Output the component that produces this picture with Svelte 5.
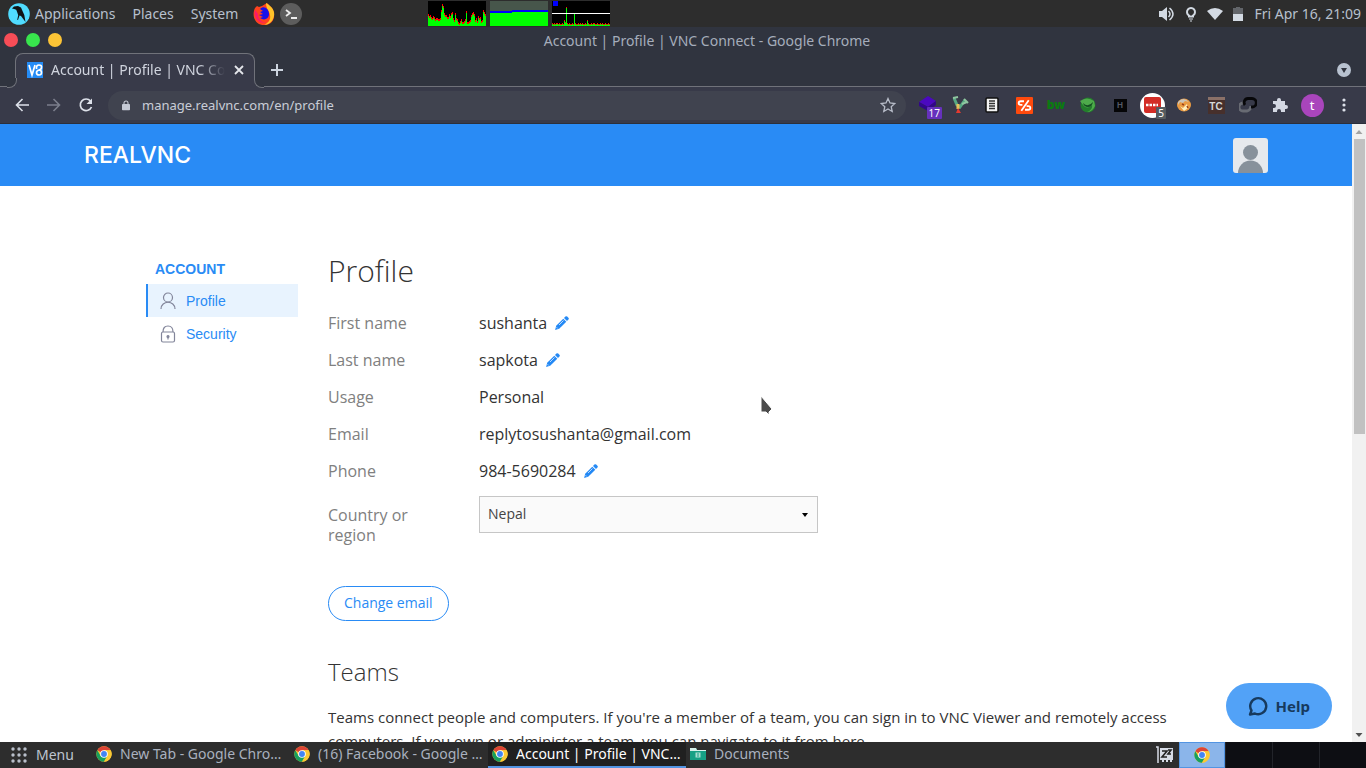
<script>
  const cpu = [12,10,11,9,8,10,9,7,8,8,7,7,8,16,22,20,13,11,11,9,9,12,10,13,14,8,6,13,8,7,4,3,5,7,4,4,5,7,15,4,4,5,6,11,13,14,12,6,8,5,10,8,9,5,6,16,14,12,11,7];
  const net = [2,1,2,1,2,2,1,2,1,1,2,1,5,3,18,2,1,2,1,1,2,1,12,2,1,1,2,1,2,1,2,1,1,2,1,5,2,1,1,2,1,2,2,1,1,2,1,1,2,1,2,1,1,2,1,1,2,1];
  const rows = [
    ['First name', 'sushanta', true],
    ['Last name', 'sapkota', true],
    ['Usage', 'Personal', false],
    ['Email', 'replytosushanta@gmail.com', false],
    ['Phone', '984-5690284', true]
  ];
  const tasks = ['New Tab - Google Chrome', '(16) Facebook - Google Chrome', 'Account | Profile | VNC Connect'];
  let country = $state('Nepal');
</script>

{#snippet chrome()}
  <svg width="16" height="16" viewBox="0 0 48 48" aria-hidden="true">
    <circle cx="24" cy="24" r="23" fill="#fbc934" />
    <path d="M24 24 4.1 12.5A23 23 0 0 1 43.9 12.5H24Z" fill="#dd4436" />
    <path d="M4.1 12.5A23 23 0 0 0 24 47L34 29.7 24 24 14 29.7Z" fill="#17a05d" />
    <path d="M24 12.5H43.9A23 23 0 0 1 24 47L34 30Z" fill="#fbc934" />
    <circle cx="24" cy="24" r="11.5" fill="#fff" />
    <circle cx="24" cy="24" r="8.8" fill="#4285f4" />
  </svg>
{/snippet}

<div class="desktop">
  <header class="panel">
    <nav class="menus">
      <svg class="parrot" width="22" height="22" viewBox="0 0 22 22" aria-hidden="true">
        <circle cx="11" cy="11" r="10.8" fill="#50dcff" />
        <path d="M4 5.500 6 3.500l4-.5 3 1.500 1.500 3.500 1.800 4 1.200 7-3-4-1.500-2-1.500-.5-1.500 4.500-.8-.3 1-4.500-1-3-1-2.500-2-.7Z" fill="#101416" />
      </svg>
      <button>Applications</button>
      <button>Places</button>
      <button>System</button>
      <svg class="fox" width="22" height="24" viewBox="0 0 22 24" aria-hidden="true">
        <path d="M2 6 4 4l2 1 3-1 5-3 5 5c4 6 3 17-8 17C3 23-2 15 2 6Z" fill="#ff421e" />
        <path d="M13 1c7 4 9 9 8 13-1 6-6 9-10 9 4-2 7-5 6-10-.5-4-4-6-4-12Z" fill="#ffc329" />
        <path d="M7 7c4-4 9 0 9 5s-5 7-9 4l3-1-4-2 4-1-3-2 3-1Z" fill="#1710e8" />
        <path d="M2 8c-2 8 4 14 11 13-5-1-8-4-8-9Z" fill="#f91b69" />
      </svg>
      <svg width="22" height="22" viewBox="0 0 22 22" aria-hidden="true">
        <circle cx="11" cy="11" r="11" fill="#5d5d5d" />
        <path d="m6 7 4 3-4 3M11 15h6" fill="none" stroke="#eee" stroke-width="1.8" />
      </svg>
    </nav>
    <div class="monitors">
      <svg width="58" height="25" shape-rendering="crispEdges" aria-hidden="true">
        <rect width="58" height="25" fill="#000" />
        {#each cpu as v, i}
          <rect x={i} y={25 - v} width="1" height={v} fill="#f00" />
          <rect x={i} y={27 - v} width="1" height={v} fill="#0f0" />
        {/each}
      </svg>
      <svg width="58" height="25" shape-rendering="crispEdges" aria-hidden="true">
        <rect width="58" height="25" fill="#47564b" />
        <path d="M0 10h22v-1h36v5H0Z" fill="#00f" />
        <path d="M0 12h22v-1h36v14H0Z" fill="#0f0" />
      </svg>
      <svg width="58" height="25" shape-rendering="crispEdges" aria-hidden="true">
        <rect width="58" height="25" fill="#000" />
        <rect x="1" width="5" height="5" fill="#00f" />
        {#each net as v, i}
          <rect x={i} y={24 - v} width="1" height={v + 1} fill="#f00" />
          <rect x={i} y={25 - v} width="1" height={v} fill="#0f0" />
        {/each}
        <rect y="12" width="58" height="1" fill="#fff" />
      </svg>
    </div>
    <div class="tray">
      <svg width="16" height="16" viewBox="0 0 16 16" aria-hidden="true">
        <path d="M0 5h3l5-4v14l-5-4H0Z" fill="#d3dae3" />
        <path d="M9.500 5q3 3 0 6M10.500 2q7 6 0 12" fill="none" stroke="#d3dae3" stroke-width="1.500" />
      </svg>
      <svg width="12" height="16" viewBox="0 0 12 16" aria-hidden="true">
        <path d="M4 10.500V9.500a4 4 0 1 1 4 0v1Z" fill="none" stroke="#d3dae3" stroke-width="2" />
        <path d="M4 13h4M5 15h2" stroke="#d3dae3" stroke-width="1" />
      </svg>
      <svg width="16" height="16" viewBox="0 0 16 16" aria-hidden="true">
        <path d="M0 5q8-6 16 0L8 14Z" fill="#d3dae3" />
      </svg>
      <svg width="10" height="16" viewBox="0 0 10 16" aria-hidden="true">
        <path d="M0 2h3V1h4v1h3v6H0Z" fill="#62656a" /><path d="M0 8h10v7H0Z" fill="#d3dae3" />
      </svg>
      <time>Fri Apr 16, 21:09</time>
    </div>
  </header>

  <div class="titlebar">
    <div class="lights">
      <button class="red" aria-label="Close window"></button>
      <button class="green" aria-label="Maximize window"></button>
      <button class="amber" aria-label="Minimize window"></button>
    </div>
    <span class="title">Account | Profile | VNC Connect - Google Chrome</span>
    <span></span>
  </div>

  <div class="strip">
    <div class="tab">
      <span class="curve left"></span><span class="curve right"></span>
      <svg width="16" height="16" viewBox="0 0 16 16" aria-hidden="true">
        <rect width="16" height="16" fill="#258cf6" />
        <path d="m2 3 3 10 3-10M9.500 7q-.5-4 2.500-4t2.500 2.500q0 2-2.500 2.500-2.500.500-2.500 2.700T12 13t2.500-2.500Q14.500 8 12 8" fill="none" stroke="#fff" stroke-width="1.700" />
      </svg>
      <span class="tabtext">Account | Profile | VNC Connect</span>
      <button aria-label="Close tab"><svg width="10" height="10" viewBox="0 0 10 10"><path d="m1 1 8 8M9 1 1 9" stroke="#e4e6eb" stroke-width="1.800" /></svg></button>
    </div>
    <button class="plus" aria-label="New tab"><svg width="12" height="12" viewBox="0 0 12 12"><path d="M6 0v12M0 6h12" stroke="#ccd4df" stroke-width="2" /></svg></button>
    <button class="search" aria-label="Search tabs"><svg width="14" height="14" viewBox="0 0 14 14"><circle cx="7" cy="7" r="7" fill="#b8c2d0" /><path d="M4 5h6l-3 5Z" fill="#30343f" /></svg></button>
  </div>

  <div class="toolbar">
    <button aria-label="Back"><svg width="14" height="14" viewBox="0 0 14 14"><path d="M14 7H2M7.500 1 1.500 7l6 6" fill="none" stroke="#dde1ea" stroke-width="1.600" /></svg></button>
    <button aria-label="Forward"><svg width="14" height="14" viewBox="0 0 14 14"><path d="M0 7h12M6.500 1l6 6-6 6" fill="none" stroke="#7b7e8c" stroke-width="1.600" /></svg></button>
    <button aria-label="Reload"><svg width="16" height="16" viewBox="0 0 16 16"><path d="M13.500 10a5.800 5.800 0 1 1-1-6" fill="none" stroke="#dde1ea" stroke-width="1.700" /><path d="M14 1.500V7H8.500Z" fill="#dde1ea" /></svg></button>
    <div class="omnibox">
      <svg width="8" height="11" viewBox="0 0 10 12" aria-hidden="true"><path d="M1 4h8q1 0 1 1v6q0 1-1 1H1q-1 0-1-1V5q0-1 1-1Z" fill="#c5cad5" /><path d="M2.500 5V3a2.500 2.500 0 0 1 5 0v2" fill="none" stroke="#c5cad5" stroke-width="1.300" /></svg>
      <input aria-label="Address" value="manage.realvnc.com/en/profile" />
      <button aria-label="Bookmark"><svg width="16" height="16" viewBox="0 0 16 16"><path d="m8 1.500 2 4.500 4.800.5-3.600 3.200 1 4.800L8 12l-4.200 2.500 1-4.800L1.200 6.500 6 6Z" fill="none" stroke="#b7bcc8" stroke-width="1.300" /></svg></button>
    </div>
    <div class="extensions">
      <button aria-label="Layers"><svg width="20" height="20" viewBox="0 0 20 20"><path d="m10 1 8 5-8 6-9-5Z" fill="#4b08bf" /><path d="m1 7 9 5 8-6v4l-8 6-9-5Z" fill="#31068a" /></svg><span class="badge violet">17</span></button>
      <button aria-label="Sapling"><svg width="18" height="18" viewBox="0 0 18 18"><path d="m3 2 3 7 3 2 5-7" fill="none" stroke="#55a983" stroke-width="3" /><path d="m2 2 5-1M13 3l4 4M11 8l5-2" stroke="#8fc6a0" stroke-width="2" /><path d="M7 8v5" stroke="#e4c15c" stroke-width="3" /><path d="m7 12-2 5h5Z" fill="#e5392f" /></svg></button>
      <button aria-label="Reader"><svg width="14" height="16" viewBox="0 0 14 16"><rect x="1" y="1" width="12" height="14" rx="1" fill="#f4f4f4" stroke="#111" stroke-width="1.500" /><path d="M4 4h6M4 6.500h6M4 9h6M4 11.500h6" stroke="#333" stroke-width="1.300" /></svg></button>
      <button aria-label="Routes"><svg width="17" height="17" viewBox="0 0 16 16"><rect width="16" height="16" rx="1" fill="#ff4a0d" /><path d="M7.500 4H4.500Q2.500 4 2.500 5.700T4.500 7.500H6M12 3 5 13M8.500 12h3q2 0 2-1.700T11.500 8.500H10" fill="none" stroke="#fff" stroke-width="1.700" /></svg></button>
      <button aria-label="Builder"><span class="bw">bw</span></button>
      <button aria-label="Green orb"><svg width="18" height="16" viewBox="0 0 18 16"><circle cx="9" cy="8" r="7.500" fill="#237d2c" /><path d="M1 4q7-5 14 0l1 5q-3 6-8 6 6-2 5-7-5 5-9 0Z" fill="#4eaa4b" /><path d="M4 6q5 5 10-1-1 5-5 5-4 0-5-4Z" fill="#154f22" /></svg></button>
      <button aria-label="H"><span class="hbox">H</span></button>
      <button aria-label="Passwords"><span class="white"><svg width="17" height="16" viewBox="0 0 17 16"><rect width="17" height="16" rx="2" fill="#d32d27" /><path d="M2 8h12" stroke="#fff" stroke-width="2.500" stroke-dasharray="2.500 1" /></svg></span><span class="badge gray">5</span></button>
      <button aria-label="Cookies"><svg width="16" height="14" viewBox="0 0 16 14"><ellipse cx="8" cy="7" rx="7" ry="6.500" fill="#e99a42" /><path d="M2 4q5-6 11 0l-4-1-2 2-3-1-2 3" fill="#c9c4bb" /><path d="m4 8 3 2 4-4 1 4-4 3Z" fill="#fff0bd" /><path d="m6 6 2 1m3 1 1 2" stroke="#9c3f16" stroke-width="1.500" /></svg></button>
      <button aria-label="TC"><span class="tc">TC</span></button>
      <button aria-label="Links"><svg width="18" height="18" viewBox="0 0 18 18" fill="none" stroke-width="2.800"><path d="M5 7H4a3.800 3.800 0 0 0 0 8h4a4 4 0 0 0 3.500-5" stroke="#686b73" /><path d="M12 11h1a4 4 0 0 0 0-8.500H9a4 4 0 0 0-3 6.500" stroke="#070709" /></svg></button>
      <button aria-label="Extensions"><svg width="16" height="16" viewBox="0 0 16 16"><path d="M1 4h4V3a2 2 0 0 1 4 0v1h4v4h1a2 2 0 0 1 0 4h-1v3H9v-1a2 2 0 0 0-4 0v1H1v-4h1a2 2 0 0 0 0-4H1Z" fill="#d4d8e3" /></svg></button>
      <button aria-label="Account"><span class="profile">t</span></button>
      <button aria-label="Browser menu"><svg width="4" height="14" viewBox="0 0 4 14" fill="#dde1ea"><circle cx="2" cy="2" r="1.600" /><circle cx="2" cy="7" r="1.600" /><circle cx="2" cy="12" r="1.600" /></svg></button>
    </div>
  </div>

  <div class="viewport">
    <div class="page">
      <header class="site">
        <a class="logo" href="#home">REALVNC</a>
        <button class="avatar" aria-label="Your account"><svg width="35" height="35" viewBox="0 0 35 35"><rect width="35" height="35" rx="3" fill="#e6e9ed" /><circle cx="17.500" cy="14.500" r="7.500" fill="#87919b" /><path d="M5 35a12.500 12.500 0 0 1 25 0Z" fill="#87919b" /></svg></button>
      </header>
      <div class="content">
        <nav class="side">
          <h2>ACCOUNT</h2>
          <a class="current" href="#profile">
            <svg width="16" height="18" viewBox="0 0 16 18" fill="none" stroke="#82859a" stroke-width="1.200"><circle cx="8" cy="5.500" r="4.500" /><path d="M1 17c0-9 14-9 14 0" /></svg>
            Profile</a>
          <a href="#security">
            <svg width="16" height="18" viewBox="0 0 16 18" fill="none" stroke="#82859a" stroke-width="1.200"><rect x="1.500" y="7" width="13" height="10" rx="1.500" /><path d="M3 7q0-6 5-6t5 6" /><circle cx="8" cy="11.500" r="1" fill="#82859a" /><path d="M8 12v2.500" /></svg>
            Security</a>
        </nav>
        <main>
          <h1>Profile</h1>
          <dl>
            {#each rows as [label, value, editable]}
              <div class="row">
                <dt>{label}</dt>
                <dd>{value}{#if editable}<button class="edit" aria-label="Edit {label}"><svg width="14" height="14" viewBox="0 0 14 14"><path d="M9 2 10.400.6q.9-.9 1.800 0l1.200 1.200q.9.900 0 1.800L12 5Z" fill="#2489f5" /><path d="M8.300 2.700 11.300 5.700 4.200 12.800.1 13.900l1.100-4.100Z" fill="#2489f5" /><path d="M1.600 11.300 2.700 12.400M4 9l4.500-4.500" stroke="#fff" stroke-width=".7" /></svg></button>{/if}</dd>
              </div>
            {/each}
          </dl>
          <div class="region">
            <label for="country">Country or region</label>
            <div class="choice">
              <select id="country" bind:value={country}><option>Nepal</option></select>
              <svg width="6" height="4" viewBox="0 0 6 4" aria-hidden="true"><path d="M0 0h6L3 4Z" fill="#000" /></svg>
            </div>
          </div>
          <button class="change">Change email</button>
          <h2>Teams</h2>
          <p>Teams connect people and computers. If you're a member of a team, you can sign in to VNC Viewer and remotely access computers. If you own or administer a team, you can navigate to it from here.</p>
        </main>
      </div>
    </div>
    <div class="scrollbar" aria-hidden="true">
      <svg width="14" height="14" viewBox="0 0 14 14"><path d="M3.500 10h7L7 6Z" fill="#a3a3a3" /></svg>
      <div class="track"><div class="thumb"></div></div>
      <svg width="14" height="14" viewBox="0 0 14 14"><path d="M3.500 5h7L7 9Z" fill="#505050" /></svg>
    </div>
    <button class="help">
      <svg width="20" height="20" viewBox="0 0 20 20" aria-hidden="true"><path d="M3.500 14.500A8 8 0 1 1 7 17.500L2 18.500Z" fill="none" stroke="#173a5e" stroke-width="2.400" stroke-linejoin="round" /></svg>
      Help
    </button>
    <svg class="pointer" width="16" height="24" viewBox="0 0 16 24" aria-hidden="true"><path d="M2 2v16h5l3 3V18l3-3Z" fill="#4b4b4b" stroke="#fff" stroke-width="1" /></svg>
  </div>

  <footer class="taskbar">
    <button class="start">
      <svg width="16" height="16" viewBox="0 0 16 16" fill="#b9bfca" aria-hidden="true">
        {#each [2, 8, 14] as y}{#each [2, 8, 14] as x}<circle cx={x} cy={y} r="1.700" />{/each}{/each}
      </svg>
      Menu
    </button>
    <div class="tasks">
      {#each tasks as task, i}
        <button class:active={i === 2}>{@render chrome()}<span>{task}</span></button>
      {/each}
      <button>
        <svg width="16" height="16" viewBox="0 0 16 16" aria-hidden="true"><path d="M0 2h6l1 2h9v10H0Z" fill="#16a085" /><path d="M0 2h6l1 2h9v1H0Z" fill="#d5f1eb" /><rect x="5.500" y="6.500" width="5" height="5" fill="#a5ded1" /><path d="M7 8h2m-2 2h2" stroke="#16a085" /></svg>
        <span>Documents</span>
      </button>
    </div>
    <svg class="sleep" width="18" height="18" viewBox="0 0 18 18" aria-hidden="true"><path d="M0 1h2v16" fill="none" stroke="#d7dce6" stroke-width="1.500" /><path d="M4 2h13v12h-1v2h-2v-2h-2v2h-2v-2H8v2H6v-2H4Z" fill="#d7dce6" /><path d="M6 5h5l-5 6h5M12 4h3l-3 4h3" fill="none" stroke="#222" stroke-width="1.600" /></svg>
    <div class="spaces">
      <button class="on" aria-label="Workspace 1">{@render chrome()}</button>
      <button aria-label="Workspace 2"></button>
      <button aria-label="Workspace 3"></button>
      <button aria-label="Workspace 4"></button>
    </div>
  </footer>
</div>

<style>
  :global(body) { margin: 0; }
  * { box-sizing: border-box; }
  button { border: 0; padding: 0; background: none; color: inherit; font: inherit; }
  svg { display: block; flex: none; }
  a { text-decoration: none; }
  .desktop { display: flex; flex-direction: column; height: 100vh; overflow: hidden; font: 14px/20px "Noto Sans", sans-serif; background: #30343f; }

  .panel { flex: none; height: 27px; display: grid; grid-template-columns: 428px auto 1fr; align-items: center; background: #2d2d2d; color: #b7c0cd; padding-right: 5px; }
  .menus { display: flex; align-items: center; padding-left: 8px; gap: 17px; }
  .menus .parrot { margin-right: -12px; }
  .menus .fox { margin: 0 -12px 0 -2px; }
  .monitors { display: flex; gap: 4px; }
  .tray { display: flex; align-items: center; justify-content: flex-end; gap: 10px; }
  .tray time { margin-left: 2px; }

  .titlebar { flex: none; height: 26px; display: grid; grid-template-columns: 1fr auto 1fr; align-items: center; padding: 0 4px; color: #a5adbb; }
  .title { margin-left: 48px; padding-top: 1px; }
  .lights { display: flex; gap: 8px; }
  .lights button { width: 14px; height: 14px; border-radius: 50%; }
  .red { background: #f74d57; } .green { background: #38e54d; } .amber { background: #fcc436; }

  .strip { flex: none; height: 34px; display: flex; align-items: center; padding: 0 15px; box-shadow: inset 0 -1px #70727a; }
  .tab { position: relative; width: 240px; height: 34px; display: flex; align-items: center; padding: 0 10px 1px 11px; border: 1px solid #70727a; border-bottom: 0; border-radius: 8px 8px 0 0; background: #383a49; color: #d0d4de; }
  .curve { position: absolute; bottom: 0; width: 9px; height: 9px; background: #383a49; }
  .curve::before { content: ""; display: block; width: 9px; height: 9px; background: #30343f; border-bottom: 1px solid #70727a; }
  .left { left: -9px; } .right { right: -9px; }
  .left::before { border-right: 1px solid #70727a; border-bottom-right-radius: 8px; }
  .right::before { border-left: 1px solid #70727a; border-bottom-left-radius: 8px; }
  .tabtext { flex: 1; margin: 0 9px 0 8px; white-space: nowrap; overflow: hidden; mask-image: linear-gradient(90deg, #000 85%, transparent); }
  .plus { margin-left: 16px; }
  .search { margin-left: auto; }

  .toolbar { flex: none; height: 37px; display: flex; align-items: center; padding: 0 6px; background: #383a49; border-bottom: 1px solid #2b2f3b; }
  .toolbar > button, .extensions button { position: relative; width: 32px; height: 32px; display: grid; place-items: center; }
  .omnibox { flex: 1; min-width: 0; height: 29px; margin: 0 6px; padding: 0 10px 0 14px; border-radius: 15px; background: #40434f; display: flex; align-items: center; gap: 12px; }
  .omnibox input { flex: 1; min-width: 0; border: 0; padding: 0; outline: 0; background: none; color: #c9cdd7; font: 13px/18px "Noto Sans", sans-serif; }
  .extensions { display: flex; }
  .badge { position: absolute; right: 4px; bottom: 2px; padding: 0 2px; border-radius: 1px; color: #fff; font: 10px/12px "Noto Sans", sans-serif; }
  .violet { right: 2px; background: #6631bd; } .gray { right: 2px; background: #555b60; }
  .bw { color: #0b7b10; font: 900 12px/16px "Noto Sans", sans-serif; }
  .hbox { width: 13px; height: 13px; background: #050507; color: #555966; font: 700 8px/13px Inter, sans-serif; }
  .white { width: 25px; height: 25px; border-radius: 50%; background: #fff; display: grid; place-items: center; }
  .tc { width: 17px; height: 17px; background: #47302c; border-top: 3px solid #8b7168; color: #d5d9d8; font: 700 10px/14px "Liberation Sans", sans-serif; }
  .profile { width: 23px; height: 23px; border-radius: 50%; background: #a945bc; color: #fff; font: 13px/22px "Noto Sans", sans-serif; }

  .viewport { position: relative; flex: 1; min-height: 0; display: flex; background: #fff; }
  .page { flex: 1; min-width: 0; overflow: hidden; font-family: "Open Sans", sans-serif; color: #333; }
  .site { height: 62px; padding: 0 84px; background: #298bf5; display: flex; align-items: center; justify-content: space-between; }
  .logo { color: #fff; font: 500 23px/28px Inter, sans-serif; }
  .content { max-width: 1060px; margin: 0 auto; padding-top: 64px; display: grid; grid-template-columns: 152px 1fr; gap: 30px; }
  .side { padding-top: 10px; font: 14px/18px "Liberation Sans", sans-serif; }
  .side h2 { margin: 0 0 6px 9px; color: #298bf5; font: 700 14px/18px "Liberation Sans", sans-serif; }
  .side a { height: 33px; padding-left: 12px; border-left: 2px solid transparent; display: flex; align-items: center; gap: 10px; color: #298bf5; }
  .side .current { background: #e8f3fe; border-color: #298bf5; }
  main h1 { margin: 0 0 12px; font-size: 30px; line-height: 42px; font-weight: 300; }
  dl { margin: 0; }
  .row, .region { display: grid; grid-template-columns: 151px 1fr; font-size: 16px; line-height: 20px; }
  .row { height: 37px; align-items: center; }
  dt, .region label { color: #808080; }
  dd { margin: 0; display: flex; align-items: center; gap: 8px; }
  .region { padding-top: 7px; }
  .region label { width: 100px; padding-top: 9px; }
  .choice { position: relative; max-width: 339px; height: 37px; }
  .choice select { appearance: none; width: 100%; height: 37px; padding: 0 8px 2px; border: 1px solid #c6c6c6; border-radius: 0; background: #fafafa; color: #444; font: 14px/20px "Open Sans", sans-serif; }
  .choice svg { position: absolute; right: 10px; top: 17px; }
  .change { margin-top: 41px; height: 35px; padding: 0 15px 2px; border: 1px solid #298bf5; border-radius: 18px; color: #298bf5; font-size: 14px; }
  main h2 { margin: 34px 0 16px; font-size: 24px; line-height: 34px; font-weight: 300; }
  main p { margin: 0; font-size: 15px; line-height: 24px; }

  .scrollbar { flex: none; width: 14px; background: #f1f1f1; display: flex; flex-direction: column; }
  .track { flex: 1; padding: 1px 1px 0 2px; }
  .thumb { height: 50%; background: #c1c1c1; }
  .help { position: absolute; right: 34px; bottom: 13px; height: 46px; padding: 0 22px; border-radius: 23px; display: flex; align-items: center; gap: 8px; background: #52a2f7; color: #173a5e; font-size: 15px; font-weight: 700; }
  .pointer { position: absolute; left: 759px; top: 270px; }

  .taskbar { flex: none; height: 26px; display: flex; align-items: center; background: #2d2d2d; color: #a9b1bf; }
  .start { width: 92px; padding-left: 11px; display: flex; align-items: center; gap: 9px; color: #bec5d0; }
  .tasks { flex: 1; min-width: 0; display: flex; }
  .tasks button { width: 198px; height: 26px; padding: 0 4px; display: flex; align-items: center; gap: 8px; border-bottom: 2px solid transparent; }
  .tasks span { overflow: hidden; text-overflow: ellipsis; white-space: nowrap; }
  .tasks .active { background: #202020; border-color: #5294e2; color: #fff; }
  .sleep { margin-right: 5px; }
  .spaces { display: flex; gap: 1px; background: #22242a; }
  .spaces button { width: 46px; height: 26px; display: grid; place-items: center; background: #0d0e13; }
  .spaces .on { background: #8bb5ea; border: 1px solid #5294e2; }
</style>
